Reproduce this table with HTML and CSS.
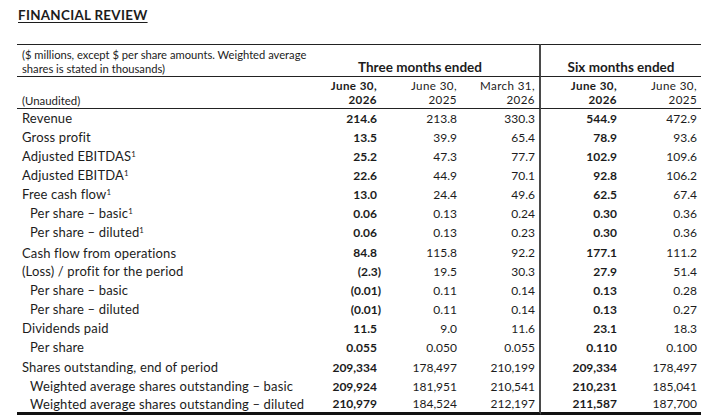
FILE: index.html
```html
<!DOCTYPE html>
<html>
<head>
<meta charset="utf-8">
<link rel="stylesheet" href="styles.css">
</head>
<body>
<h1 class="title">FINANCIAL REVIEW</h1>
<table class="fin">
  <colgroup>
    <col class="c-label"><col class="c-num"><col class="c-num"><col class="c-num"><col class="c-num"><col class="c-num">
  </colgroup>
  <thead>
    <tr class="h1">
      <th class="note">($ millions, except $ per share amounts. Weighted average<br>shares is stated in thousands)</th>
      <th class="grp sep" colspan="3">Three months ended</th>
      <th class="grp" colspan="2">Six months ended</th>
    </tr>
    <tr class="h2">
      <th class="unaud">(Unaudited)</th>
      <th class="b">June 30,<br>2026</th>
      <th>June 30,<br>2025</th>
      <th class="sep">March 31,<br>2026</th>
      <th class="b">June 30,<br>2026</th>
      <th>June 30,<br>2025</th>
    </tr>
  </thead>
  <tbody>
    <tr><td class="lbl">Revenue</td><td class="b">214.6</td><td>213.8</td><td class="sep">330.3</td><td class="b">544.9</td><td>472.9</td></tr>
    <tr><td class="lbl">Gross profit</td><td class="b">13.5</td><td>39.9</td><td class="sep">65.4</td><td class="b">78.9</td><td>93.6</td></tr>
    <tr><td class="lbl">Adjusted EBITDAS<sup>1</sup></td><td class="b">25.2</td><td>47.3</td><td class="sep">77.7</td><td class="b">102.9</td><td>109.6</td></tr>
    <tr><td class="lbl">Adjusted EBITDA<sup>1</sup></td><td class="b">22.6</td><td>44.9</td><td class="sep">70.1</td><td class="b">92.8</td><td>106.2</td></tr>
    <tr><td class="lbl">Free cash flow<sup>1</sup></td><td class="b">13.0</td><td>24.4</td><td class="sep">49.6</td><td class="b">62.5</td><td>67.4</td></tr>
    <tr><td class="lbl ind">Per share – basic<sup>1</sup></td><td class="b">0.06</td><td>0.13</td><td class="sep">0.24</td><td class="b">0.30</td><td>0.36</td></tr>
    <tr><td class="lbl ind">Per share – diluted<sup>1</sup></td><td class="b">0.06</td><td>0.13</td><td class="sep">0.23</td><td class="b">0.30</td><td>0.36</td></tr>
    <tr class="gap"><td class="lbl">Cash flow from operations</td><td class="b">84.8</td><td>115.8</td><td class="sep">92.2</td><td class="b">177.1</td><td>111.2</td></tr>
    <tr><td class="lbl">(Loss) / profit for the period</td><td class="b neg">(2.3)</td><td>19.5</td><td class="sep">30.3</td><td class="b">27.9</td><td>51.4</td></tr>
    <tr><td class="lbl ind">Per share – basic</td><td class="b neg">(0.01)</td><td>0.11</td><td class="sep">0.14</td><td class="b">0.13</td><td>0.28</td></tr>
    <tr><td class="lbl ind">Per share – diluted</td><td class="b neg">(0.01)</td><td>0.11</td><td class="sep">0.14</td><td class="b">0.13</td><td>0.27</td></tr>
    <tr><td class="lbl">Dividends paid</td><td class="b">11.5</td><td>9.0</td><td class="sep">11.6</td><td class="b">23.1</td><td>18.3</td></tr>
    <tr><td class="lbl ind">Per share</td><td class="b">0.055</td><td>0.050</td><td class="sep">0.055</td><td class="b">0.110</td><td>0.100</td></tr>
    <tr class="gap2"><td class="lbl">Shares outstanding, end of period</td><td class="b">209,334</td><td>178,497</td><td class="sep">210,199</td><td class="b">209,334</td><td>178,497</td></tr>
    <tr><td class="lbl ind">Weighted average shares outstanding – basic</td><td class="b">209,924</td><td>181,951</td><td class="sep">210,541</td><td class="b">210,231</td><td>185,041</td></tr>
    <tr class="last"><td class="lbl ind">Weighted average shares outstanding – diluted</td><td class="b">210,979</td><td>184,524</td><td class="sep">212,197</td><td class="b">211,587</td><td>187,700</td></tr>
  </tbody>
</table>
</body>
</html>
```

FILE: styles.css
```css
html, body {
  margin: 0;
  padding: 0;
  background: #ffffff;
}
body {
  font-family: Lato, "Liberation Sans", sans-serif;
  font-size: 12px;
  color: #1c1c1c;
  padding: 0 0 0 17px;
}
.title {
  margin: 0;
  padding: 7px 0 0 1px;
  font-size: 13.4px;
  font-weight: 700;
  line-height: 16px;
  height: 44px;
  box-sizing: border-box;
  text-decoration: underline;
  text-underline-offset: 2px;
  text-decoration-thickness: 1px;
  letter-spacing: 0.3px;
}
.fin {
  border-collapse: separate;
  border-spacing: 0;
  table-layout: fixed;
  width: 684px;
}
.c-label { width: 284px; }
.c-num { width: 80px; }
.fin th, .fin td {
  box-sizing: border-box;
  padding: 0 4px 0 4px;
  text-align: right;
  white-space: nowrap;
  font-weight: 400;
}
.fin th.b, .fin td.b { font-weight: 700; }
.sep { border-right: 2px solid #4a4a4a; }
.h1 th {
  border-top: 1px solid #222;
  border-bottom: 1px solid #222;
  height: 32px;
  vertical-align: bottom;
}
.h1 th.note {
  text-align: left;
  font-size: 11.2px;
  line-height: 14px;
  padding: 3px 0 0 5px;
  vertical-align: top;
}
.h1 th.grp {
  text-align: center;
  font-weight: 700;
  font-size: 13.5px;
  padding-bottom: 2px;
  line-height: 14px;
}
.h2 th {
  border-bottom: 1px solid #222;
  height: 32px;
  vertical-align: top;
  font-size: 11.6px;
  letter-spacing: 0.4px;
  line-height: 14px;
  padding-top: 2px;
  padding-bottom: 0;
}
.h2 th.unaud {
  text-align: left;
  vertical-align: bottom;
  font-size: 11.4px;
  letter-spacing: 0;
  padding-left: 5px;
  padding-bottom: 0;
  line-height: 14px;
}
.fin td {
  height: 19px;
  line-height: 19px;
  vertical-align: top;
}
.fin td.lbl {
  text-align: left;
  padding-left: 5px;
  font-size: 13px;
  letter-spacing: 0.15px;
}
.fin td.ind { padding-left: 13px; }
.fin td.neg { padding-right: 0; }
.gap td { height: 20px; padding-top: 2px; line-height: 18px; }
.gap2 td { height: 20px; padding-top: 1px; }
.last td {
  height: 19px;
  line-height: 16px;
  border-bottom: 3px solid #111;
}
sup {
  font-size: 0.6em;
  line-height: 0;
  vertical-align: 0.55em;
}
```
